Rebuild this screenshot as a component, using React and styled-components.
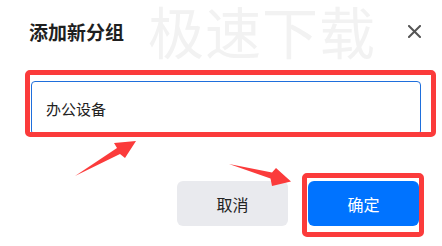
import styled, { createGlobalStyle } from "styled-components";

const GlobalStyle = createGlobalStyle`
  html, body {
    margin: 0;
    padding: 0;
    background: #ffffff;
  }
  body {
    font-family: "Noto Sans CJK SC", "Noto Sans", sans-serif;
  }
`

export default function App() {
  return (
    <Dialog>
      <GlobalStyle />
      <Watermark>极速下载</Watermark>
      <Header>
        <Title>添加新分组</Title>
        <CloseButton aria-label="close">
          <svg width="13" height="13" viewBox="0 0 13 13">
            <path d="M1 1 L12 12 M12 1 L1 12" stroke="#555" strokeWidth="2" strokeLinecap="square" />
          </svg>
        </CloseButton>
      </Header>
      <Body>
        <Input defaultValue="办公设备" />
      </Body>
      <Footer>
        <Button>取消</Button>
        <Button $primary>确定</Button>
      </Footer>

      <Mark $left={25} $top={70} $width={411} $height={67} />
      <Mark $left={302} $top={173} $width={122} $height={64} />
      <Arrows width="442" height="246" viewBox="0 0 442 246">
        <polygon points="75,176 117,148 114,143 136,141 125,158 120,154" fill="#fb3b3b" />
        <polygon points="229,164 272,172.5 276,168 291,181.5 272,186 270.5,178.5" fill="#fb3b3b" />
      </Arrows>
    </Dialog>
  )
}

const Dialog = styled.div`
  position: relative;
  width: 442px;
  height: 246px;
  overflow: hidden;
  background: #ffffff;
`

const Watermark = styled.div`
  position: absolute;
  left: 148px;
  top: 1px;
  font-size: 56px;
  line-height: 58px;
  letter-spacing: 1px;
  color: #f2f2f2;
  white-space: nowrap;
  pointer-events: none;
`

const Header = styled.div`
  position: relative;
  height: 62px;
  display: flex;
  align-items: center;
  justify-content: space-between;
  padding: 0 21px 0 29px;
  box-sizing: border-box;
`

const Title = styled.h1`
  margin: 0;
  font-size: 19px;
  font-weight: 700;
  color: #1f1f1f;
`

const CloseButton = styled.button`
  border: none;
  background: none;
  padding: 0;
  width: 13px;
  height: 13px;
  display: flex;
  cursor: pointer;
`

const Body = styled.div`
  padding: 19px 21px 0 31px;
`

const Input = styled.input`
  display: block;
  width: 100%;
  height: 54px;
  box-sizing: border-box;
  border: 1px solid #1f6fdc;
  border-radius: 4px;
  padding: 0 14px;
  font-family: "Noto Sans CJK SC", sans-serif;
  font-size: 15px;
  color: #222;
  outline: none;
`

const Footer = styled.div`
  display: flex;
  justify-content: flex-end;
  gap: 20px;
  padding: 46px 23px 0 0;
`

const Button = styled.button`
  width: 111px;
  height: 45px;
  border: none;
  border-radius: 6px;
  font-family: "Noto Sans CJK SC", sans-serif;
  font-size: 16px;
  background: ${p => p.$primary ? "#0073ff" : "#e9eaee"};
  color: ${p => p.$primary ? "#ffffff" : "#222"};
  cursor: pointer;
`

const Mark = styled.div`
  position: absolute;
  left: ${p => p.$left}px;
  top: ${p => p.$top}px;
  width: ${p => p.$width}px;
  height: ${p => p.$height}px;
  box-sizing: border-box;
  border: 5px solid #fb3b3b;
  border-radius: 5px;
  pointer-events: none;
`

const Arrows = styled.svg`
  position: absolute;
  left: 0;
  top: 0;
  pointer-events: none;
`
